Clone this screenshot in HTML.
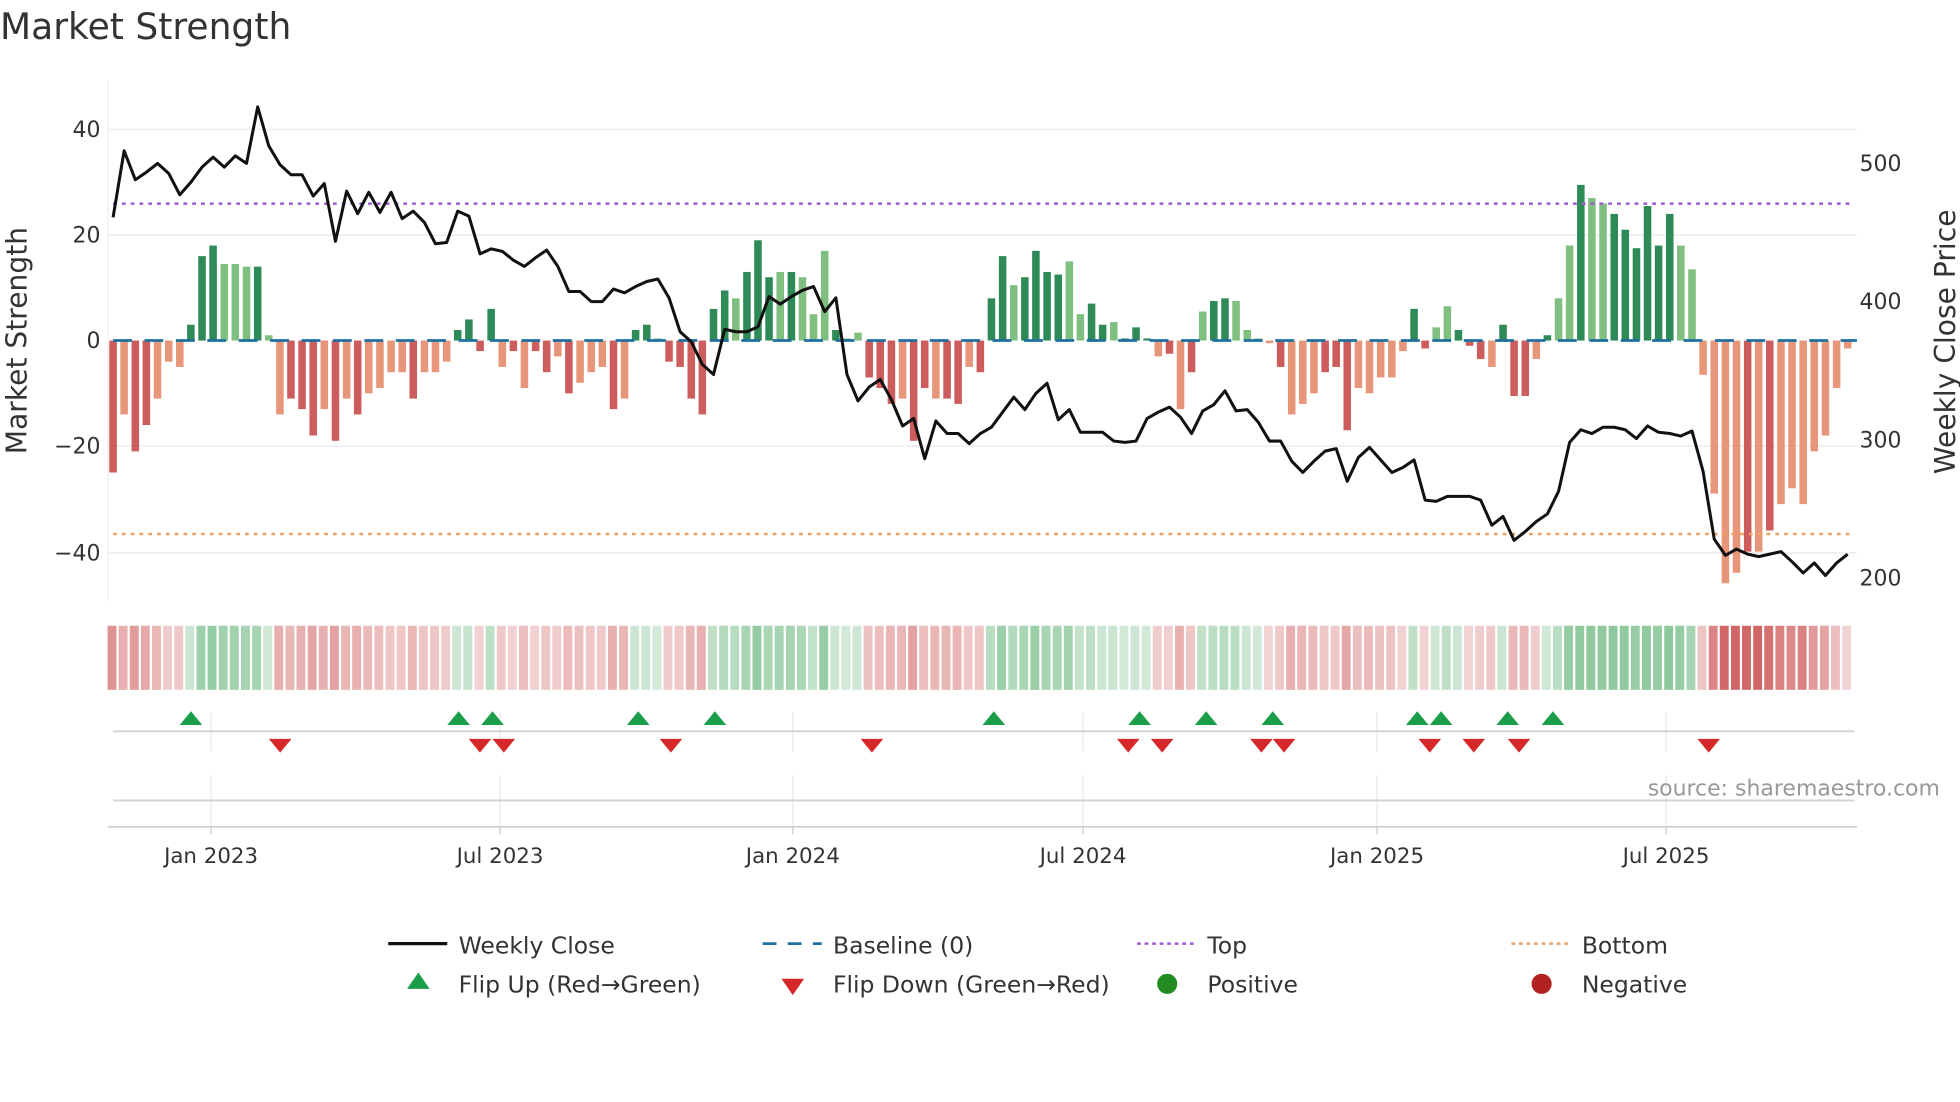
<!DOCTYPE html>
<html><head><meta charset="utf-8"><style>
html,body{margin:0;padding:0;background:#fff;width:1960px;height:1102px;overflow:hidden}
svg{display:block;font-family:"DejaVu Sans","Liberation Sans",sans-serif}
</style></head><body>
<svg id="s" width="1960" height="1102" viewBox="0 0 1560 877" xmlns="http://www.w3.org/2000/svg">
<rect width="1560" height="877" fill="#fff"/>
<text x="0" y="31" font-size="28.7" fill="#333">Market Strength</text>
<g stroke="#ebedf0" stroke-width="1.3">
<line x1="86" x2="1478" y1="103" y2="103"/><line x1="86" x2="1478" y1="187" y2="187"/>
<line x1="86" x2="1478" y1="355" y2="355"/><line x1="86" x2="1478" y1="440" y2="440"/>
</g>
<line x1="86" x2="86" y1="65" y2="478" stroke="#eee" stroke-width="1"/>
<g font-size="17.5" fill="#333" text-anchor="end">
<text x="80" y="109">40</text><text x="80" y="193">20</text><text x="80" y="277">0</text>
<text x="80" y="361">−20</text><text x="80" y="446">−40</text>
</g>
<g font-size="17.5" fill="#333">
<text x="1480" y="136">500</text><text x="1480" y="246">400</text><text x="1480" y="356">300</text><text x="1480" y="466">200</text>
</g>
<text transform="translate(21,271) rotate(-90)" font-size="22.4" fill="#333" text-anchor="middle">Market Strength</text>
<text transform="translate(1556,272) rotate(-90)" font-size="22.4" fill="#333" text-anchor="middle">Weekly Close Price</text>
<g id="bars"></g>
<line x1="90" x2="1478" y1="271" y2="271" stroke="#1f6fa0" stroke-width="2.2" stroke-dasharray="15,10"/>
<line x1="90" x2="1476" y1="162" y2="162" stroke="#a05ad8" stroke-width="2" stroke-dasharray="3,4"/>
<line x1="90" x2="1476" y1="425" y2="425" stroke="#f0a060" stroke-width="2" stroke-dasharray="3,4"/>
<polyline id="price" fill="none" stroke="#111" stroke-width="2.4" stroke-linejoin="round"/>
<g id="strip"></g>
<g stroke="#e6e9ee" stroke-width="1">
<line x1="168" x2="168" y1="567" y2="598"/><line x1="398" x2="398" y1="567" y2="598"/><line x1="631" x2="631" y1="567" y2="598"/><line x1="862" x2="862" y1="567" y2="598"/><line x1="1096" x2="1096" y1="567" y2="598"/><line x1="1326" x2="1326" y1="567" y2="598"/>
<line x1="168" x2="168" y1="617" y2="658"/><line x1="398" x2="398" y1="617" y2="658"/><line x1="631" x2="631" y1="617" y2="658"/><line x1="862" x2="862" y1="617" y2="658"/><line x1="1096" x2="1096" y1="617" y2="658"/><line x1="1326" x2="1326" y1="617" y2="658"/>
</g>
<line x1="90" x2="1476" y1="582" y2="582" stroke="#cfd2d6" stroke-width="1.5"/>
<line x1="90" x2="1476" y1="637" y2="637" stroke="#cfd2d6" stroke-width="1.5"/>
<line x1="86" x2="1478" y1="658" y2="658" stroke="#cfd2d6" stroke-width="1.5"/>
<g stroke="#cfd2d6" stroke-width="1.2"><line x1="168" x2="168" y1="658" y2="664"/><line x1="398" x2="398" y1="658" y2="664"/><line x1="631" x2="631" y1="658" y2="664"/><line x1="862" x2="862" y1="658" y2="664"/><line x1="1096" x2="1096" y1="658" y2="664"/><line x1="1326" x2="1326" y1="658" y2="664"/></g>
<g id="flips"></g>
<text x="1544" y="633" font-size="17.5" fill="#999" text-anchor="end">source: sharemaestro.com</text>
<g font-size="17" fill="#333" text-anchor="middle">
<text x="168" y="687">Jan 2023</text><text x="398" y="687">Jul 2023</text><text x="631" y="687">Jan 2024</text>
<text x="862" y="687">Jul 2024</text><text x="1096" y="687">Jan 2025</text><text x="1326" y="687">Jul 2025</text>
</g>
<g font-size="18.7" fill="#333">
<line x1="309" x2="356" y1="751" y2="751" stroke="#111" stroke-width="2.6"/>
<text x="365" y="759">Weekly Close</text>
<line x1="607" x2="654" y1="751" y2="751" stroke="#1f6fa0" stroke-width="2.2" stroke-dasharray="11,9"/>
<text x="663" y="759">Baseline (0)</text>
<line x1="905" x2="950" y1="751" y2="751" stroke="#a05ad8" stroke-width="2" stroke-dasharray="3,3"/>
<text x="961" y="759">Top</text>
<line x1="1203" x2="1248" y1="751" y2="751" stroke="#f0a060" stroke-width="2" stroke-dasharray="3,3"/>
<text x="1259" y="759">Bottom</text>
<polygon points="333,774 324,787 342,787" fill="#1a9e4a"/>
<text x="365" y="790">Flip Up (Red→Green)</text>
<polygon points="622,779 640,779 631,792" fill="#d62828"/>
<text x="663" y="790">Flip Down (Green→Red)</text>
<circle cx="929" cy="783" r="8" fill="#228b22"/>
<text x="961" y="790">Positive</text>
<circle cx="1227" cy="783" r="8" fill="#b22222"/>
<text x="1259" y="790">Negative</text>
</g>
</svg>
<script>
var v=[-25,-14,-21,-16,-11,-4,-5,3,16,18,14.5,14.5,14,14,1,-14,-11,-13,-18,-13,-19,-11,-14,-10,-9,-6,-6,-11,-6,-6,-4,2,4,-2,6,-5,-2,-9,-2,-6,-3,-10,-8,-6,-5,-13,-11,2,3,0.4,-4,-5,-11,-14,6,9.5,8,13,19,12,13,13,12,5,17,2,0.4,1.5,-7,-9,-12,-11,-19,-9,-11,-11,-12,-5,-6,8,16,10.5,12,17,13,12.5,15,5,7,3,3.5,0.4,2.5,0.4,-3,-2.5,-13,-6,5.5,7.5,8,7.5,2,0.4,-0.5,-5,-14,-12,-10,-6,-5,-17,-9,-10,-7,-7,-2,6,-1.5,2.5,6.5,2,-1,-3.5,-5,3,-10.5,-10.5,-3.5,1,8,18,29.5,27,26,24,21,17.5,25.5,18,24,18,13.5,-6.5,-29,-46,-44,-40,-40,-36,-31,-28,-31,-21,-18,-9,-1.5];
var t="dlddllldddllldlldddldldlllldlllddddldlddldllldlddlddddddldddldllldlldddlddlddldddlddddllddldddldldlddlllldllldddlllllddlldddldddldlldllddddddlllllldldllllllllllll";
var p=[173,120,143,137,130,138,155,145,133,125,133,124,130,85,116,131,139,139,156,146,192,152,170,153,169,153,174,168,177,194,193,168,172,202,198,200,207,212,205,199,212,232,232,240,240,230,233,228,224,222,237,264,272,290,298,262,264,264,260,236,242,236,231,228,248,237,298,319,308,302,318,339,333,365,335,345,345,353,345,340,328,316,326,313,305,334,326,344,344,344,351,352,351,333,328,324,332,345,327,322,311,327,326,336,351,351,367,376,367,359,357,383,364,356,366,376,372,366,398,399,395,395,395,398,418,411,430,423,415,409,391,352,342,345,340,340,342,349,339,344,345,347,343,375,429,442,437,441,443,441,439,447,456,448,458,448,441];
var NS="http://www.w3.org/2000/svg",dx=8.85,x0=90;
function el(n,a,par){var e=document.createElementNS(NS,n);for(var k in a)e.setAttribute(k,a[k]);document.getElementById(par).appendChild(e);return e;}
var pts=[];
for(var i=0;i<v.length;i++){
 var x=x0+i*dx,val=v[i],h=Math.abs(val)*4.2,d=t[i]=='d';
 var c=val>0?(d?"#2e8b57":"#7fbf7f"):(d?"#cd5c5c":"#e8967a");
 if(Math.abs(val)>0.3) el("rect",{x:(x-3).toFixed(1),y:(val>0?271-h:271).toFixed(1),width:6,height:h.toFixed(1),fill:c},"bars");
 var sc=val>=0?"rgba(60,160,85,"+(0.22+0.35*Math.min(1,val/20)).toFixed(2)+")":"rgba(200,70,70,"+(0.22+0.6*Math.min(1,-val/40)).toFixed(2)+")";
 el("rect",{x:(x-4.4).toFixed(1),y:498,width:(dx-1.7).toFixed(1),height:51,fill:sc},"strip");
 pts.push(x.toFixed(1)+","+p[i]);
}
document.getElementById("price").setAttribute("points",pts.join(" "));
[152,365,392,508,569,791,907,960,1013,1128,1147,1200,1236].forEach(function(x){el("polygon",{points:x+",566 "+(x-9)+",577 "+(x+9)+",577",fill:"#1a9e4a"},"flips");});
[223,382,401,534,694,898,925,1004,1022,1138,1173,1209,1360].forEach(function(x){el("polygon",{points:(x-9)+",588 "+(x+9)+",588 "+x+",599",fill:"#d62828"},"flips");});
</script>
</body></html>
